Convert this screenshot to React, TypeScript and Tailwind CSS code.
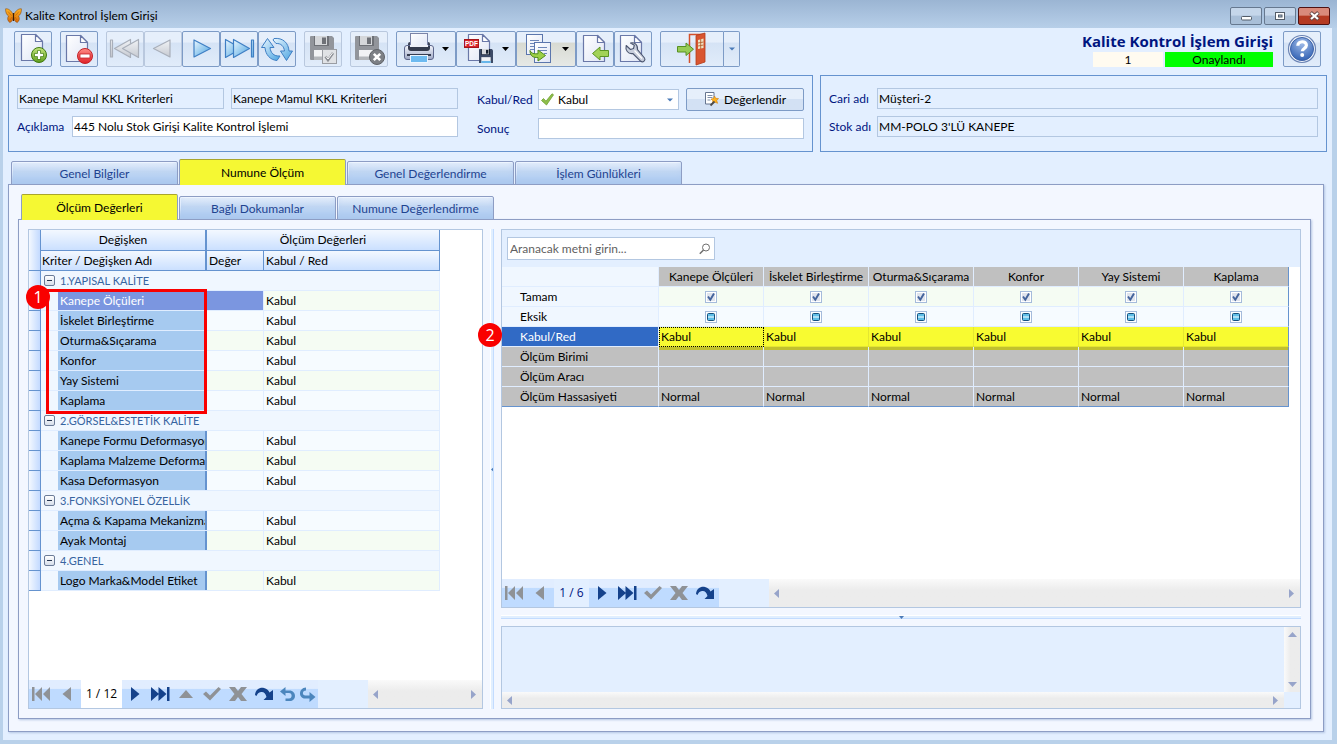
import React from "react";

/* ---------- shared gradients ---------- */

function Gradients() {
  return (
    <svg width="0" height="0" className="absolute" aria-hidden="true">
      <defs>
        <linearGradient id="page" x1="0" y1="0" x2="1" y2="1">
          <stop offset="0" stopColor="#ffffff" />
          <stop offset="1" stopColor="#dfe5f5" />
        </linearGradient>
        <linearGradient id="green" x1="0" y1="0" x2="0" y2="1">
          <stop offset="0" stopColor="#c5e67f" />
          <stop offset="1" stopColor="#5f9c1c" />
        </linearGradient>
        <linearGradient id="red" x1="0" y1="0" x2="0" y2="1">
          <stop offset="0" stopColor="#ff8d86" />
          <stop offset="1" stopColor="#e01f26" />
        </linearGradient>
        <linearGradient id="sky" x1="0" y1="0" x2="1" y2="1">
          <stop offset="0" stopColor="#eaf7ff" />
          <stop offset="1" stopColor="#4aa3e0" />
        </linearGradient>
        <linearGradient id="silver" x1="0" y1="0" x2="0" y2="1">
          <stop offset="0" stopColor="#f1f3f6" />
          <stop offset="1" stopColor="#c6cad1" />
        </linearGradient>
        <linearGradient id="printer" x1="0" y1="0" x2="0" y2="1">
          <stop offset="0" stopColor="#f4f6fc" />
          <stop offset="1" stopColor="#9fa9c6" />
        </linearGradient>
        <radialGradient id="help" cx="0.5" cy="0.25" r="0.8">
          <stop offset="0" stopColor="#9fbbe8" />
          <stop offset="1" stopColor="#2c5cb0" />
        </radialGradient>
        <linearGradient id="wing" x1="0" y1="0" x2="0" y2="1">
          <stop offset="0" stopColor="#ffb526" />
          <stop offset="1" stopColor="#d96a08" />
        </linearGradient>
      </defs>
    </svg>
  );
}

/* ---------- toolbar icons ---------- */

function Art({ w = 36, children }: { w?: number; children: React.ReactNode }) {
  return (
    <svg width={w} height="34" viewBox={`1 1 ${w} 34`} className="block shrink-0" aria-hidden="true">
      {children}
    </svg>
  );
}

function Page({ x, y, w = 21, h = 26 }: { x: number; y: number; w?: number; h?: number }) {
  const f = 7;
  return (
    <g stroke="#6a78a8" strokeWidth="1.2" strokeLinejoin="round">
      <path d={`M${x} ${y}h${w - f}l${f} ${f}v${h - f}h${-w}z`} fill="url(#page)" />
      <path d={`M${x + w - f} ${y}v${f}h${f}z`} fill="#ffffff" />
    </g>
  );
}

const DropMark = () => <path d="M46 16h7l-3.500 4z" fill="#000" />;

const NewIcon = () => (
  <Art>
    <Page x={7.5} y={3.5} />
    <circle cx="25" cy="24" r="7.500" fill="url(#green)" stroke="#3f7a12" />
    <path d="M25 19.500v9M20.500 24h9" stroke="#3f7a12" strokeWidth="4" />
    <path d="M25 20v8M21 24h8" stroke="#fff" strokeWidth="2.400" />
  </Art>
);
const DeleteIcon = () => (
  <Art>
    <Page x={6.5} y={4.5} />
    <circle cx="25" cy="25" r="7.500" fill="url(#red)" stroke="#c32228" />
    <rect x="20" y="23" width="10" height="4" fill="#fff" stroke="#c32228" strokeWidth="0.800" />
  </Art>
);
const FirstIcon = () => (
  <Art>
    <g fill="url(#silver)" stroke="#a9afba" strokeWidth="1.200" strokeLinejoin="round">
      <rect x="4.500" y="9" width="2" height="17" />
      <path d="M24.500 8.500v18L8.500 17.500z" />
      <path d="M32.500 8.500v18l-16-9z" />
    </g>
  </Art>
);
const PrevIcon = () => (
  <Art>
    <path d="M26 9v17L9.500 17.500z" fill="url(#silver)" stroke="#a9afba" strokeWidth="1.200" strokeLinejoin="round" />
  </Art>
);
const NextIcon = () => (
  <Art>
    <path d="M12 9v17l16.500-8.500z" fill="url(#sky)" stroke="#3f7fc4" strokeWidth="1.200" strokeLinejoin="round" />
  </Art>
);
const LastIcon = () => (
  <Art>
    <g fill="url(#sky)" stroke="#3f7fc4" strokeWidth="1.200" strokeLinejoin="round">
      <path d="M5.500 8.500v18l16-9z" />
      <path d="M13.500 8.500v18l16-9z" />
      <rect x="31.500" y="9" width="2" height="17" />
    </g>
  </Art>
);
const RefreshIcon = () => (
  <Art>
    <g fill="url(#sky)" stroke="#3f7fc4" strokeWidth="1" strokeLinejoin="round">
      <path d="M9.500 7.500L3.500 16.500h3.500c.500 7 5 12.500 12 13l3-4.500c-6.500.500-9.500-3.500-10-8.500h4z" />
      <path d="M28.500 29.500l6-9.500h-3.500c-.500-8-6-13.500-15-12.500l-1 1.500 3 3.500c5-.500 8 3 8.500 7.500h-4z" />
    </g>
  </Art>
);

function Floppy({ x, y, s, tone, shade, label }: { x: number; y: number; s: number; tone: string; shade: string; label: string }) {
  return (
    <g transform={`translate(${x} ${y}) scale(${s / 24})`}>
      <path d="M0 1q0-1 1-1h21l2 2v21q0 1-1 1H1q-1 0-1-1z" fill={tone} />
      <rect x="4" y="0" width="15" height="10" fill={shade} />
      <rect x="5" y="0" width="12" height="9" fill="#d5d7da" />
      <rect x="12" y="1.500" width="4" height="6.500" fill={shade} />
      <rect x="4" y="14" width="16" height="10" fill="#f2f3f5" />
      <rect x="4" y="20.500" width="16" height="3.500" fill={label} />
    </g>
  );
}
const SaveIcon = () => (
  <Art>
    <Floppy x={6} y={5} s={24} tone="#92959b" shade="#6e7177" label="#b4b7bb" />
    <rect x="18.500" y="18.500" width="14" height="14" fill="#e0e2e5" stroke="#9a9da3" />
    <path d="M21.500 25.500l2.500 3.500 5-7" fill="none" stroke="#8b8e94" strokeWidth="2.600" />
    <path d="M22 25.500l2 2.500 4.500-6" fill="none" stroke="#fff" />
  </Art>
);
const SaveCloseIcon = () => (
  <Art>
    <Floppy x={5} y={5} s={24} tone="#92959b" shade="#6e7177" label="#b4b7bb" />
    <circle cx="27" cy="26" r="7.500" fill="#7d8085" stroke="#606368" />
    <path d="M23.800 22.800l6.400 6.400M30.200 22.800l-6.400 6.400" stroke="#fff" strokeWidth="2.600" />
  </Art>
);
const PrinterIcon = () => (
  <Art w={58}>
    <path d="M12 13q0-2 2-2h18q2 0 2 2v3H12z" fill="#3d4356" />
    <rect x="14.500" y="2.500" width="17" height="14" fill="url(#page)" stroke="#7b84a8" />
    <rect x="8.500" y="14.500" width="29" height="14" rx="2.500" fill="url(#printer)" stroke="#5d678c" />
    <path d="M12 15h22v2q0 3-3 3H15q-3 0-3-3z" fill="#343a4c" />
    <path d="M14 14h18v2H14z" fill="#eef0f7" />
    <path d="M11 23h24v2H11z" fill="#363d52" />
    <rect x="14.500" y="24.500" width="17" height="7" fill="#6dbaf0" stroke="#eaf5ff" />
    <DropMark />
  </Art>
);
const PdfIcon = () => (
  <Art w={58}>
    <Page x={12.5} y={3.5} />
    <rect x="8.500" y="8.500" width="14" height="8" fill="#d9232b" stroke="#a3141a" />
    <text x="15.500" y="15.200" textAnchor="middle" fontSize="6.500" fontWeight="700" fill="#fff" fontFamily="'Liberation Sans', sans-serif">
      PDF
    </text>
    <Floppy x={23} y={18} s={14} tone="#3c4a66" shade="#16202f" label="#67b6ea" />
    <DropMark />
  </Art>
);
const CopyIcon = () => (
  <Art w={58}>
    <rect x="10.500" y="3.500" width="16" height="20" fill="url(#page)" stroke="#5b76ad" />
    <path d="M14 9.500h9M14 12.500h9M14 15.500h9M14 18.500h5" stroke="#6d86b8" />
    <rect x="18.500" y="11.500" width="16" height="20" fill="url(#page)" stroke="#5b76ad" />
    <path d="M22 16.500h9M22 19.500h9M28 22.500h3" stroke="#6d86b8" />
    <path d="M14 19.500c1 3 4 3.500 8 3.300v-3.800l7.500 5.500-7.500 5.500v-3.500c-5 .300-8-1.500-8-7z" fill="#9bcf45" stroke="#4f8a1c" strokeLinejoin="round" />
    <DropMark />
  </Art>
);
const ImportIcon = () => (
  <Art>
    <Page x={7.5} y={4.5} />
    <path d="M16.500 22.500l7.500-6.500v3.500h8.500v6H24v3.500z" fill="#a2d257" stroke="#5a9422" strokeLinejoin="round" />
  </Art>
);
const WrenchIcon = () => (
  <Art>
    <Page x={6.5} y={4.500} />
    <path
      d="M12.200 14.500l4.300 4 3-1 .800-3.200-3.800-2.300c3.500-1 7.500 1.200 7 6.700l7 8.300c1.500 2-1.500 5-3.700 3.300l-8-7.800c-4.800.800-7.800-3.500-6.600-8z"
      fill="#c9cfdd"
      stroke="#4c566f"
      strokeWidth="1.100"
      strokeLinejoin="round"
    />
    <path d="M20.500 19.500l7.500 8" stroke="#fff" strokeWidth="1.200" />
  </Art>
);
const ExitIcon = () => (
  <Art w={62}>
    <path d="M29.500 32V3.500H44" fill="none" stroke="#d4502b" strokeWidth="1.500" />
    <path d="M36 4.500l9-2.500v29l-9 3z" fill="#d95530" stroke="#b33c1b" strokeWidth="0.800" />
    <path d="M38 9l5.500-1.500v9.500L38 18z" fill="#efe3c4" />
    <path d="M40.700 8v10M38 12l5.500-1M38 15l5.500-1" stroke="#b9622f" strokeWidth="0.900" />
    <path d="M17.500 15.500H26V12l7.500 6.200L26 24.500V21h-8.500z" fill="#97cb55" stroke="#569022" strokeLinejoin="round" />
  </Art>
);
const HelpIcon = () => (
  <Art>
    <circle cx="19" cy="18" r="13.500" fill="#f3f7fd" stroke="#6a83b4" strokeWidth="1.200" />
    <circle cx="19" cy="18" r="11.500" fill="url(#help)" stroke="#3c62a8" />
    <path d="M14.800 14.800c.200-5.300 8.600-5.300 8.600-.500 0 3-4.200 3.200-4.200 6" fill="none" stroke="#fff" strokeWidth="3.200" />
    <circle cx="19.200" cy="24" r="2" fill="#fff" />
  </Art>
);

const BTN = "rounded-[2px] border bg-linear-to-b from-[#e6effb] from-50% to-[#d3e1f4] to-50%";
const LIVE = "border-[#7d9bc6]";
const OFF = "border-[#b9c8de]";

function Tool({ label, disabled, className = "", children }: { label: string; disabled?: boolean; className?: string; children: React.ReactNode }) {
  return (
    <button
      type="button"
      aria-label={label}
      disabled={disabled}
      className={`h-9 shrink-0 rounded-[2px] border bg-linear-to-b from-[#e6effb] from-30% via-[#d5e3f5] via-32% to-[#e1ecfa] ${disabled ? OFF : LIVE} ${className}`}
    >
      {children}
    </button>
  );
}

function Toolbar() {
  return (
    <div className="flex gap-2">
      <Tool label="Yeni"><NewIcon /></Tool>
      <Tool label="Sil"><DeleteIcon /></Tool>
      <div className="flex">
        <Tool label="İlk kayıt" disabled><FirstIcon /></Tool>
        <Tool label="Önceki kayıt" disabled><PrevIcon /></Tool>
        <Tool label="Sonraki kayıt"><NextIcon /></Tool>
        <Tool label="Son kayıt"><LastIcon /></Tool>
        <Tool label="Yenile"><RefreshIcon /></Tool>
      </div>
      <Tool label="Kaydet" disabled><SaveIcon /></Tool>
      <Tool label="Vazgeç" disabled><SaveCloseIcon /></Tool>
      <div className="flex">
        <Tool label="Yazdır"><PrinterIcon /></Tool>
        <Tool label="PDF kaydet"><PdfIcon /></Tool>
        <Tool label="Kopyala" className="from-[#e5e8e4] via-[#d8dad2] to-[#e6e9e6]"><CopyIcon /></Tool>
        <Tool label="Aktar"><ImportIcon /></Tool>
        <Tool label="Ayarlar"><WrenchIcon /></Tool>
      </div>
      <div className="flex">
        <Tool label="Çıkış" className="rounded-r-none"><ExitIcon /></Tool>
        <Tool label="Çıkış seçenekleri" className="flex w-4 items-center justify-center rounded-l-none border-l-0">
          <svg width="6" height="4" viewBox="0 0 6 4"><path d="M0 0.500h6l-3 3z" fill="#4a7ab8" /></svg>
        </Tool>
      </div>
    </div>
  );
}

/* ---------- window frame ---------- */

function TitleBar() {
  const b = "flex h-[18px] w-8 items-center justify-center rounded-[2px] border";
  return (
    <header className="flex h-7 items-center bg-linear-to-b from-[#9bb5d3] to-[#b7cfe9] pt-1 pr-[7px] pl-[5px]">
      <svg width="17" height="16" viewBox="0 0 17 16" aria-hidden="true">
        <path d="M8.500 7C6 2 3 0.500 0.600 0.800 0.400 4 1.500 7 3.500 8c-1.500 2-1 5 1.300 6.500C7 14 8.200 11 8.500 8.500c.300 2.500 1.500 5.500 3.700 6 2.300-1.500 2.800-4.500 1.300-6.500 2-1 3.100-4 2.900-7.200C14 .500 11 2 8.500 7z" fill="url(#wing)" stroke="#7a3a05" strokeWidth="0.500" />
        <path d="M8.500 5v8" stroke="#3c1d04" strokeWidth="1.200" />
        <path d="M3 3.500l3.500 4M14 3.500l-3.500 4M5 12l2-3M12 12l-2-3" stroke="#a85206" strokeWidth="0.500" />
      </svg>
      <h1 className="ml-[3px] flex-1">Kalite Kontrol İşlem Girişi</h1>
      <div className="flex gap-[2px]">
        <button type="button" aria-label="Simge durumuna küçült" className={`${b} border-[#66788f] bg-linear-to-b from-[#c5d6ea] from-45% to-[#a9bfd8] to-50%`}>
          <svg width="13" height="12"><rect x="1.500" y="6.500" width="10" height="3.500" rx="1" fill="#fff" stroke="#535c68" /></svg>
        </button>
        <button type="button" aria-label="Ekranı kapla" className={`${b} border-[#66788f] bg-linear-to-b from-[#c5d6ea] from-45% to-[#a9bfd8] to-50%`}>
          <svg width="12" height="12"><rect x="1.500" y="2.500" width="9" height="7" fill="#fff" stroke="#535c68" /><rect x="4.500" y="5" width="3.500" height="2" fill="#a9bfd8" stroke="#535c68" /></svg>
        </button>
        <button type="button" aria-label="Kapat" className={`${b} border-[#4f1212] bg-linear-to-b from-[#d98a7b] from-45% to-[#b53a22] to-50%`}>
          <svg width="13" height="12" viewBox="0 0 13 12"><path d="M2.500 2.500l8 7M10.500 2.500l-8 7" stroke="#6b4a4a" strokeWidth="4" /><path d="M3 3l7 6M10 3l-7 6" stroke="#fff" strokeWidth="2.200" /></svg>
        </button>
      </div>
    </header>
  );
}

/* ---------- header form ---------- */

const FIELD = "h-[21px] w-full min-w-0 border border-[#b3c7e1] px-px text-black outline-none";

function Summary() {
  return (
    <div className="mt-2 mr-[5px] ml-[5px] flex gap-[7px] text-[#00157f]">
      <section className="flex h-[77px] w-[805px] shrink-0 border border-[#6593cf] px-2 pt-3">
        <div className="w-[441px]">
          <div className="flex gap-[7px]">
            <input aria-label="Kriter" readOnly defaultValue="Kanepe Mamul KKL Kriterleri" className={`${FIELD} max-w-[207px] bg-[#e3efff]`} />
            <input aria-label="Kriter adı" readOnly defaultValue="Kanepe Mamul KKL Kriterleri" className={`${FIELD} bg-[#e3efff]`} />
          </div>
          <div className="mt-[7px] flex items-center">
            <label htmlFor="aciklama" className="w-[55px] shrink-0">Açıklama</label>
            <input id="aciklama" defaultValue="445 Nolu Stok Girişi Kalite Kontrol İşlemi" className={`${FIELD} bg-white`} />
          </div>
        </div>
        <div className="ml-[19px] flex-1">
          <div className="flex items-center">
            <label htmlFor="kabul" className="w-[61px] shrink-0">Kabul/Red</label>
            <div className="relative w-[141px]">
              <select id="kabul" className={`${FIELD} block appearance-none bg-white pl-[19px]`} defaultValue="Kabul">
                <option>Kabul</option>
                <option>Red</option>
              </select>
              <svg className="pointer-events-none absolute top-1 left-[3px]" width="13" height="13" viewBox="0 0 13 13"><path d="M.500 7.500l2-2 2.500 2.700L11 .800l1.500 1L5.500 12z" fill="#8fbf4a" stroke="#6fa030" strokeWidth="0.800" /></svg>
              <svg className="pointer-events-none absolute top-[9px] right-[6px]" width="6" height="4"><path d="M0 0.500h6l-3 3z" fill="#4a7ab8" /></svg>
            </div>
            <button type="button" className={`ml-[7px] flex h-[23px] flex-1 items-center justify-center gap-1 text-black ${BTN} ${LIVE}`}>
              <svg width="16" height="15" viewBox="0 0 16 15" aria-hidden="true">
                <path d="M1.500.500h8.500v8.500l-2.500 3h-6z" fill="#fff" stroke="#66758f" />
                <path d="M3.500 3.500h5M3.500 5.500h5M3.500 8h3" stroke="#7f8fa8" />
                <path d="M10.500 4l1.200 2.300 2.800.200-1.800 2 .900 2.800-3.100-1.300-2 1.600.300-2.800L7 7l2.500-.500z" fill="#ffb21c" stroke="#d07c08" strokeWidth="0.600" />
                <path d="M6.500 13.500l4-4" stroke="#4b4b4b" strokeWidth="1.800" />
              </svg>
              Değerlendir
            </button>
          </div>
          <div className="mt-[7px] flex items-center">
            <label htmlFor="sonuc" className="w-[61px] shrink-0">Sonuç</label>
            <input id="sonuc" defaultValue="" className={`${FIELD} bg-white`} />
          </div>
        </div>
      </section>
      <section className="h-[77px] flex-1 border border-[#6593cf] px-2 pt-3">
        <div className="flex items-center">
          <label htmlFor="cari" className="w-[48px] shrink-0 whitespace-nowrap">Cari adı</label>
          <input id="cari" readOnly defaultValue="Müşteri-2" className={`${FIELD} bg-[#e3efff]`} />
        </div>
        <div className="mt-[7px] flex items-center">
          <label htmlFor="stok" className="w-[48px] shrink-0 whitespace-nowrap">Stok adı</label>
          <input id="stok" readOnly defaultValue="MM-POLO 3'LÜ KANEPE" className={`${FIELD} bg-[#e3efff]`} />
        </div>
      </section>
    </div>
  );
}

/* ---------- tabs ---------- */

function Tabs({ items, active, width, className }: { items: string[]; active: number; width: string; className: string }) {
  return (
    <div role="tablist" className={`relative flex items-end gap-px ${className}`}>
      {items.map((t, i) => (
        <button
          key={t}
          type="button"
          role="tab"
          aria-selected={i === active}
          className={
            i === active
              ? `h-[26px] rounded-t-[2px] border border-b-0 border-[#8d9dc4] border-t-[#a9a52c] bg-[#f5f833] text-black ${width}`
              : `h-6 rounded-t-[2px] border border-[#8d9dc4] bg-linear-to-b from-[#e3edfb] via-[#c3d8f3] via-45% to-[#c9e0ff] pt-px text-[#1e4390] shadow-[inset_0_-12px_8px_-4px_#abc8ee,inset_1px_1px_0_#eef5ff] ${width}`
          }
        >
          {t}
        </button>
      ))}
    </div>
  );
}

/* ---------- record navigator and scroll bars ---------- */

type Glyph = "first" | "prev" | "next" | "last" | "up" | "check" | "cancel" | "refresh" | "undo" | "redo";

const GLYPHS: Record<Glyph, { label: string; color: string; art: React.ReactNode }> = {
  first: { label: "İlk", color: "#8f9296", art: <path d="M1 1h2.500v14H1zM11 1v14L4 8zM19 1v14L12 8z" /> },
  prev: { label: "Önceki", color: "#8f9296", art: <path d="M14 1v14L5.500 8z" /> },
  next: { label: "Sonraki", color: "#15428b", art: <path d="M7 1v14l8.500-7z" /> },
  last: { label: "Son", color: "#15428b", art: <path d="M1 1v14l8-7zM8.500 1v14l8-7zM17 1h2.500v14H17z" /> },
  up: { label: "Düzenle", color: "#8f9296", art: <path d="M3 12L10 4l7 8z" /> },
  check: { label: "Onayla", color: "#8f9296", art: <path d="M1 8l3-2.500 4 4L16.500 1l2.500 2L8 14.500z" /> },
  cancel: { label: "İptal", color: "#8f9296", art: <path d="M1 1h6l3 4 3-4h6l-5.500 7 5.500 7h-6l-3-4-3 4H1l5.500-7z" /> },
  refresh: { label: "Yenile", color: "#15428b", art: <path d="M1 9C1.500 3.500 6 1 10 2c3 .700 4.500 2.500 5.500 4.500L19 4v10H9.500l3-3C11.500 7 9.500 5.500 7 6 4.500 6.300 3.500 8 2.500 10z" /> },
  undo: { label: "Geri al", color: "#4c86bd", art: <path d="M8.500 1L3 5.500 8.500 10V7H12c3.500 0 3.500 5.500 0 5.500H8.500V15H13c7 0 6.500-10.500-.500-10.500h-4z" /> },
  redo: { label: "İleri al", color: "#4c86bd", art: <path d="M9 1.500C1 2 1.500 12.500 8 12.500h4.500V16L18.500 11l-6-5v3.500H8.500C5 9.500 5 4.500 9 4.500z" /> },
};

function NavButton({ kind, w }: { kind: Glyph; w: string }) {
  const g = GLYPHS[kind];
  return (
    <button type="button" aria-label={g.label} className={`flex h-7 items-center justify-center bg-linear-to-b from-[#e1edff] from-30% to-[#bfdbff] to-34% ${w}`}>
      <svg width="20" height="16" viewBox="1 0 20 16" fill={g.color}>{g.art}</svg>
    </button>
  );
}

function ScrollArrow({ dir }: { dir: "left" | "right" | "up" | "down" }) {
  const d = { left: "M8 3v9L3 7.500z", right: "M7 3v9l5-4.500z", up: "M3 9h9L7.500 4z", down: "M3 5h9L7.500 10z" }[dir];
  return (
    <button type="button" aria-label={`Kaydır ${dir}`} className="flex size-4 items-center justify-center">
      <svg width="15" height="15" fill="#97a4ca"><path d={d} /></svg>
    </button>
  );
}

function HScroll({ className }: { className: string }) {
  return (
    <div className={`flex items-center justify-between bg-linear-to-b from-[#fafafa] to-[#ececec] to-40% pr-[3px] pl-px ${className}`}>
      <ScrollArrow dir="left" />
      <ScrollArrow dir="right" />
    </div>
  );
}

function Navigator({ pos, posClass, after, tail = [] }: { pos: string; posClass: string; after: Glyph[]; tail?: Glyph[] }) {
  return (
    <div className="flex h-7 bg-[#e3efff]">
      <NavButton kind="first" w="w-[26px]" />
      <NavButton kind="prev" w="w-[26px]" />
      <span className={`flex items-center justify-center font-['Open_Sans',sans-serif] ${posClass}`}>{pos}</span>
      {after.map((k) => <NavButton key={k} kind={k} w="w-[26px]" />)}
      {tail.map((k) => <NavButton key={k} kind={k} w="w-5" />)}
      <HScroll className="ml-[50px] flex-1" />
    </div>
  );
}

function Badge({ n, className }: { n: number; className: string }) {
  return (
    <span className={`absolute z-10 flex size-6 items-center justify-center rounded-full bg-[#f90000] font-['Open_Sans',sans-serif] text-base text-white ${className}`}>{n}</span>
  );
}

/* ---------- left grid ---------- */

type Row = { group: string } | { name: string };
const ROWS: Row[] = [
  { group: "1.YAPISAL KALİTE" },
  { name: "Kanepe Ölçüleri" },
  { name: "İskelet Birleştirme" },
  { name: "Oturma&Sıçarama" },
  { name: "Konfor" },
  { name: "Yay Sistemi" },
  { name: "Kaplama" },
  { group: "2.GÖRSEL&ESTETİK KALİTE" },
  { name: "Kanepe Formu Deformasyonu" },
  { name: "Kaplama Malzeme Deformasyonu" },
  { name: "Kasa Deformasyon" },
  { group: "3.FONKSİYONEL ÖZELLİK" },
  { name: "Açma & Kapama Mekanizması" },
  { name: "Ayak Montaj" },
  { group: "4.GENEL" },
  { name: "Logo Marka&Model Etiket" },
];

function CriteriaGrid() {
  const th = "border-b border-[#6593cf] bg-linear-to-b from-[#f3f8ff] to-[#cbe0ff] p-0 font-normal";
  const indicator = "border-r border-b border-[#6593cf] bg-linear-to-r from-[#f3f8ff] to-[#c3daff] p-0";
  return (
    <section className="relative flex w-[455px] shrink-0 flex-col border border-[#b3c7e1] bg-white">
      <div className="relative flex-1">
        <table className="w-[411px] table-fixed border-separate border-spacing-0 whitespace-nowrap">
          <colgroup>
            <col className="w-3" />
            <col className="w-[166px]" />
            <col className="w-[57px]" />
            <col className="w-[176px]" />
          </colgroup>
          <thead>
            <tr className="h-[21px]">
              <td rowSpan={2} className={`${indicator} bg-linear-to-b`} />
              <th className={`${th} border-r-2`}>Değişken</th>
              <th colSpan={2} className={`${th} border-r`}>Ölçüm Değerleri</th>
            </tr>
            <tr className="h-5 text-left">
              <th className={`${th} border-r-2 pl-px`}>Kriter / Değişken Adı</th>
              <th className={`${th} border-r pl-[2px]`}>Değer</th>
              <th className={`${th} border-r pl-[2px]`}>Kabul / Red</th>
            </tr>
          </thead>
          <tbody>
            {ROWS.map((r, i) => {
              if ("group" in r) {
                return (
                  <tr key={r.group} className="h-5">
                    <td className={indicator} />
                    <td colSpan={3} className="border-r border-b border-[#e0edff] bg-[#f0f7ff] p-0 text-[#3764a0]">
                      <div className="flex items-center pl-[3px] text-[11px]">
                        <button type="button" aria-label={`Daralt ${r.group}`} className="mr-[5px] size-[11px] rounded-[2px] border border-[#6b7c98] bg-linear-to-b from-white to-[#d6dfeb]">
                          <span className="mx-auto block h-px w-[5px] bg-[#26364f]" />
                        </button>
                        {r.group}
                      </div>
                    </td>
                  </tr>
                );
              }
              const tint = i % 2 ? "bg-[#f5fcf3]" : "bg-[#f6fbff]";
              const sel = i === 1;
              return (
                <tr key={r.name} className="h-5">
                  <td className={indicator} />
                  <td className="border-b border-[#e0edff] bg-[#f0f7ff] p-0">
                    <div className={`ml-[17px] h-[19px] overflow-hidden border-r-2 border-[#6593cf] pl-[2px] leading-[19px] ${sel ? "bg-[#7b96e0] text-white" : "bg-[#a6caf0]"}`}>{r.name}</div>
                  </td>
                  <td className={`border-r border-b border-[#e0edff] p-0 ${sel ? "bg-[#7b96e0]" : tint}`} />
                  <td className={`border-r border-b border-[#e0edff] p-0 pl-[2px] ${tint}`}>Kabul</td>
                </tr>
              );
            })}
          </tbody>
        </table>
        <div className="pointer-events-none absolute top-[59px] left-[17px] h-[125px] w-[161px] border-3 border-[#f90000]" />
        <Badge n={1} className="top-[55px] -left-[3px]" />
      </div>
      <Navigator
        pos="1 / 12"
        posClass="w-[41px] bg-white"
        after={["next", "last", "up", "check", "cancel", "refresh"]}
        tail={["undo", "redo"]}
      />
    </section>
  );
}

/* ---------- right grid ---------- */

const COLS = ["Kanepe Ölçüleri", "İskelet Birleştirme", "Oturma&Sıçarama", "Konfor", "Yay Sistemi", "Kaplama"];

function Check({ label, mixed }: { label: string; mixed?: boolean }) {
  return (
    <span className="relative mx-auto block size-3">
      <input
        type="checkbox"
        aria-label={label}
        defaultChecked={!mixed}
        ref={(el) => {
          if (el) el.indeterminate = !!mixed;
        }}
        className="block size-3 appearance-none border border-[#a5bbdb] bg-white"
      />
      <svg className="pointer-events-none absolute inset-0" width="12" height="12">
        {mixed ? (
          <>
            <rect x="2.500" y="2.500" width="7" height="7" rx="1" fill="#5fbfe8" stroke="#17507c" />
            <path d="M3 6h6" stroke="#e4f6ff" strokeWidth="1.200" />
          </>
        ) : (
          <>
            <rect x="2" y="2" width="8" height="8" fill="#dfe3ec" />
            <path d="M3 5.500l2.300 3.300L9 2.500" fill="none" stroke="#44649c" strokeWidth="1.900" />
          </>
        )}
      </svg>
    </span>
  );
}

function SampleTable() {
  const head = "border-r border-b border-[#e0edff] p-0 pl-[18px] text-left font-normal";
  const cell = "border-r border-b border-[#e0edff] p-0 last:border-r-[#6593cf]";
  return (
    <table className="w-[787px] table-fixed border-separate border-spacing-0 whitespace-nowrap">
      <colgroup>
        <col className="w-[157px]" />
        {COLS.map((c) => <col key={c} className="w-[105px]" />)}
      </colgroup>
      <thead>
        <tr className="h-5">
          <td className={`${head} bg-[#f0f7ff]`} />
          {COLS.map((c) => <th key={c} className={`${cell} bg-[#c0c0c0] font-normal`}>{c}</th>)}
        </tr>
      </thead>
      <tbody>
        <tr className="h-5">
          <th className={`${head} bg-[#f0f7ff]`}>Tamam</th>
          {COLS.map((c) => <td key={c} className={`${cell} bg-[#f5fcf3]`}><Check label={`Tamam ${c}`} /></td>)}
        </tr>
        <tr className="h-5">
          <th className={`${head} bg-[#f0f7ff]`}>Eksik</th>
          {COLS.map((c) => <td key={c} className={`${cell} bg-[#f6fbff]`}><Check label={`Eksik ${c}`} mixed /></td>)}
        </tr>
        <tr className="h-5">
          <th className={`${head} bg-[#316ac5] text-white`}>Kabul/Red</th>
          {COLS.map((c, i) => (
            <td key={c} className={`border-r border-b border-[#e4e632] bg-[#f8fb31] p-0 pl-[2px] last:border-r-[#6593cf] ${i ? "" : "outline-1 -outline-offset-1 outline-dotted outline-black"}`}>Kabul</td>
          ))}
        </tr>
        {["Ölçüm Birimi", "Ölçüm Aracı"].map((n, r) => (
          <tr key={n} className="h-5">
            <th className={`${head} bg-[#c0c0c0]`}>{n}</th>
            {COLS.map((c) => <td key={c} className={`${cell} bg-[#c0c0c0] ${r ? "" : "shadow-[inset_0_3px_0_#c1c02e]"}`} />)}
          </tr>
        ))}
        <tr className="h-5">
          <th className={`${head} border-b-[#6593cf] bg-[#c0c0c0]`}>Ölçüm Hassasiyeti</th>
          {COLS.map((c) => <td key={c} className={`${cell} border-b-[#6593cf] bg-[#c0c0c0] pl-[2px]`}>Normal</td>)}
        </tr>
      </tbody>
    </table>
  );
}

function SamplePanel() {
  return (
    <section className="relative flex min-w-0 flex-1 flex-col">
      <Badge n={2} className="top-[94px] -left-[23px]" />
      <div className="flex flex-1 flex-col border border-[#b3c7e1] bg-white">
        <div className="h-[37px] bg-[#e3efff] pt-[7px] pl-[5px]">
          <div className="relative w-[208px]">
            <input type="search" aria-label="Ara" placeholder="Aranacak metni girin..." className="block h-[23px] w-full border border-[#b3c7e1] bg-white px-[2px] outline-none placeholder:text-[#5f5f5f]" />
            <svg className="pointer-events-none absolute top-[6px] right-[4px]" width="12" height="12" fill="none" stroke="#6e6e6e"><circle cx="7" cy="4.500" r="3.500" /><path d="M4.500 7L.800 10.700" strokeWidth="1.500" /></svg>
          </div>
        </div>
        <div className="flex-1"><SampleTable /></div>
        <Navigator pos="1 / 6" posClass="w-[35px] bg-[#e3efff] text-[#00157f]" after={["next", "last", "check", "cancel", "refresh"]} />
      </div>
      <div className="flex h-[18px] items-center">
        <div className="flex h-1 flex-1 justify-center border-t border-b border-t-white border-b-[#c3dcff] bg-[#e1efff]">
          <svg width="5" height="3"><path d="M0 0h5L2.500 3z" fill="#4a7ab8" /></svg>
        </div>
      </div>
      <div className="grid h-[83px] grid-cols-[1fr_16px] grid-rows-[1fr_16px] border border-[#b3c7e1] bg-[#e3efff]">
        <textarea aria-label="Not" className="resize-none bg-transparent outline-none" />
        <div className="flex flex-col justify-between bg-linear-to-r from-[#fafafa] to-[#ececec] to-40%">
          <ScrollArrow dir="up" />
          <ScrollArrow dir="down" />
        </div>
        <HScroll className="" />
      </div>
    </section>
  );
}

export default function App() {
  return (
    <div className="flex min-h-screen flex-col bg-[#b9d1ea] font-['Lato','Open_Sans',sans-serif] text-[12px] leading-4 text-black">
      <Gradients />
      <TitleBar />
      <main className="mr-[5px] mb-1 ml-[3px] flex flex-1 flex-col bg-[#e3efff]">
        <div className="flex justify-between pt-[3px] pr-[11px] pl-[11px]">
          <Toolbar />
          <div className="flex gap-[10px]">
            <div className="flex flex-col items-end">
              <h2 className="h-[21px] font-['Open_Sans',sans-serif] text-[15px] leading-[21px] font-bold text-[#00157f]">Kalite Kontrol İşlem Girişi</h2>
              <div className="flex gap-[2px] text-center leading-[15px]">
                <span className="w-[70px] bg-[#fffbf0]">1</span>
                <span className="w-[108px] bg-[#00ff00]">Onaylandı</span>
              </div>
            </div>
            <Tool label="Yardım"><HelpIcon /></Tool>
          </div>
        </div>
        <Summary />
        <Tabs items={["Genel Bilgiler", "Numune Ölçüm", "Genel Değerlendirme", "İşlem Günlükleri"]} active={1} width="w-[167px]" className="z-10 mt-[7px] -mb-px ml-2" />
        <div className="mr-2 mb-2 ml-[5px] flex flex-1 flex-col border border-[#8d9dc4] bg-[#f3f7ff] pr-3 pb-3 pl-[9px] shadow-[1px_1px_2px_#b5c6e4]">
          <Tabs items={["Ölçüm Değerleri", "Bağlı Dokumanlar", "Numune Değerlendirme"]} active={0} width="w-[157px]" className="z-10 mt-[9px] -mb-px ml-[3px]" />
          <div className="flex flex-1 border border-[#8d9dc4] bg-[#f3f7ff] p-[9px] shadow-[1px_1px_2px_#b5c6e4]">
            <CriteriaGrid />
            <div className="flex w-[18px] shrink-0 justify-center">
              <div className="flex w-1 items-center border-r border-l border-r-[#c3dcff] border-l-white bg-[#e1efff]">
                <svg width="3" height="5"><path d="M3 0v5L0 2.500z" fill="#4a7ab8" /></svg>
              </div>
            </div>
            <SamplePanel />
          </div>
        </div>
      </main>
    </div>
  );
}
